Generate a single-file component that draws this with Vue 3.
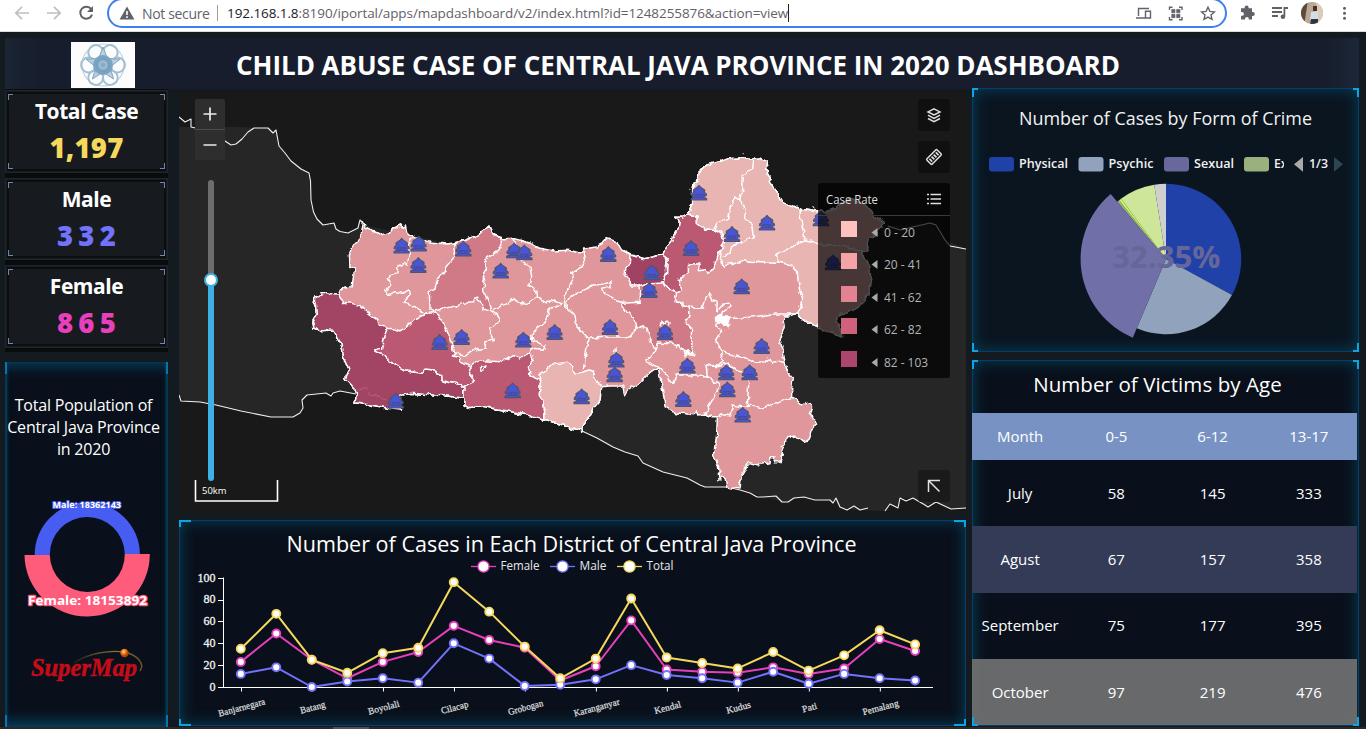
<script setup>
const stats = [
  { label: 'Total Case', value: '1,197', tone: 'yellow' },
  { label: 'Male', value: '332', tone: 'violet' },
  { label: 'Female', value: '865', tone: 'pink' },
]

const headings = ['Month', '0-5', '6-12', '13-17']
const rows = [
  ['July', '58', '145', '333'],
  ['Agust', '67', '157', '358'],
  ['September', '75', '177', '395'],
  ['October', '97', '219', '476'],
]

const legend = [
  { range: '0 - 20', color: '#fcc2c0', y: 221 },
  { range: '20 - 41', color: '#f5a3a8', y: 253 },
  { range: '41 - 62', color: '#e38290', y: 286 },
  { range: '62 - 82', color: '#cf617d', y: 318 },
  { range: '82 - 103', color: '#ad466d', y: 351 },
]

const crimes = [
  { name: 'Physical', color: '#2042a8', x: 989, w: 49 },
  { name: 'Psychic', color: '#91a3bc', x: 1078.5, w: 45 },
  { name: 'Sexual', color: '#68689c', x: 1164, w: 40 },
]

const slice = (cx, cy, r, a0, a1) => {
  const p = (a) => {
    const t = ((a - 90) * Math.PI) / 180
    return `${(cx + r * Math.cos(t)).toFixed(2)} ${(cy + r * Math.sin(t)).toFixed(2)}`
  }
  return `M${cx} ${cy}L${p(a0)}A${r} ${r} 0 ${a1 - a0 > 180 ? 1 : 0} 1 ${p(a1)}Z`
}
const slices = [
  { d: slice(1166, 259, 75.2, 0, 118.7), color: '#2042a8' },
  { d: slice(1166, 259, 75.2, 118.7, 202.9), color: '#91a3bc' },
  { d: slice(1166, 259, 75.2, 319.6, 321.4), color: '#9ab17f' },
  { d: slice(1166, 259, 75.2, 321.4, 323.2), color: '#c8f95c' },
  { d: slice(1166, 259, 75.2, 323.2, 351), color: '#cde69a' },
  { d: slice(1166, 259, 75.2, 351, 360), color: '#cfcfcf' },
  { d: slice(1166, 259, 85.4, 202.9, 319.6), color: '#706fa8' },
]

const px = (i) => 240.8 + i * 35.49
const py = (v) => 687 - v * 1.092
const series = [
  { name: 'Female', color: '#e83fbd', values: [23, 49, 25, 8, 23, 32, 56, 43, 36, 6, 19, 61, 16, 14, 13, 18, 12, 17, 44, 33] },
  { name: 'Male', color: '#7272fb', values: [12, 18, 0, 5, 8, 4, 40, 26, 1, 2, 7, 20, 11, 8, 4, 14, 3, 12, 8, 6] },
  { name: 'Total', color: '#f6d95c', values: [35, 67, 25, 13, 31, 36, 96, 69, 37, 8, 26, 81, 27, 22, 17, 32, 15, 29, 52, 39] },
]
const line = (vals) => vals.map((v, i) => `${px(i)},${py(v)}`).join(' ')
const keys = [
  { name: 'Female', color: '#e83fbd', x: 471, w: 39 },
  { name: 'Male', color: '#7272fb', x: 550, w: 27 },
  { name: 'Total', color: '#f6d95c', x: 617, w: 27 },
]
const districts = [
  ['Banjarnegara', 48], ['Batang', 26], ['Boyolali', 32], ['Cilacap', 28], ['Grobogan', 36],
  ['Karanganyar', 47], ['Kendal', 27], ['Kudus', 25], ['Pati', 15], ['Pemalang', 37],
]

/* Map geometry is in thirds of a pixel, measured from page point (300, 140). */
const province =
  '115,465 121,450 130,445 157,440 160,410 165,388 150,378 148,345 155,322 175,302 185,280 190,245 197,264 215,274 235,279 250,287 266,281 272,270 290,260 302,254 307,262 316,255 320,275 335,290 358,298 385,305 440,312 470,307 500,300 530,288 550,274 567,258 574,278 590,290 610,296 640,295 690,309 720,325 760,333 800,331 840,338 850,328 890,320 912,308 918,296 945,303 958,318 965,330 995,345 1030,356 1060,350 1085,345 1098,325 1115,305 1122,285 1135,265 1138,243 1125,232 1145,232 1165,222 1178,190 1178,150 1182,130 1196,118 1190,105 1202,95 1220,75 1260,65 1280,57 1320,54 1360,55 1378,55 1398,65 1402,100 1420,145 1445,188 1480,198 1500,208 1560,217 1575,215 1610,200 1655,175 1695,195 1725,228 1750,248 1742,262 1730,270 1728,284 1706,300 1702,333 1688,335 1690,355 1710,375 1706,395 1712,420 1706,450 1702,470 1675,500 1642,518 1620,522 1605,550 1618,560 1625,588 1600,578 1575,572 1550,555 1510,540 1490,518 1470,528 1455,527 1449,540 1453,560 1440,600 1449,630 1455,665 1460,690 1480,715 1475,740 1475,772 1490,780 1505,795 1530,788 1535,800 1528,820 1540,830 1548,850 1535,870 1525,900 1515,904 1500,892 1485,895 1475,888 1460,890 1455,908 1443,920 1448,940 1440,965 1422,965 1425,950 1412,950 1410,968 1375,975 1348,968 1335,985 1324,1005 1320,1047 1280,1042 1276,1020 1268,1010 1260,1020 1255,975 1240,945 1248,900 1250,880 1252,830 1235,830 1218,822 1195,825 1190,812 1185,824 1140,820 1118,815 1095,800 1092,770 1085,740 1075,683 1050,700 1030,720 980,752 975,768 968,738 930,738 905,740 900,780 880,805 865,835 855,845 845,873 780,852 735,838 680,824 620,812 540,798 510,806 492,795 492,775 450,769 400,765 330,760 300,768 285,790 305,810 265,805 230,798 165,788 170,755 135,718 148,690 130,650 128,625 112,590 100,570 60,572 42,565 38,545 52,520 50,500 40,488 42,472 60,464 80,458 100,464'

const shaded = [
  { c: '#a24465', p: '115,465 130,487 155,490 180,497 205,518 228,535 240,555 262,565 255,590 248,602 245,625 222,632 245,640 260,645 265,663 290,675 315,692 370,700 375,687 395,690 425,708 428,722 460,730 492,740 492,775 450,769 400,765 330,760 300,768 285,790 305,810 265,805 230,798 165,788 170,755 135,718 148,690 130,650 128,625 112,590 100,570 60,572 42,565 38,545 52,520 50,500 40,488 42,472 60,464 80,458 100,464' },
  { c: '#bb5872', p: '262,565 285,567 300,573 318,562 345,540 370,528 395,515 412,524 440,570 452,600 465,640 457,648 478,652 480,665 510,680 515,688 508,698 523,722 492,740 460,730 428,722 425,708 395,690 375,687 370,700 315,692 290,675 265,663 260,645 222,632 245,625 248,602' },
  { c: '#bb5872', p: '515,675 545,662 605,665 635,648 660,657 690,640 700,665 685,680 690,705 722,718 718,765 732,785 735,838 680,824 620,812 540,798 510,806 492,795 492,740 523,722 508,698' },
  { c: '#d17a87', p: '470,307 500,300 530,288 550,274 567,258 574,278 590,290 605,297 600,322 592,335 555,358 556,385 548,400 555,425 551,450 563,480 573,512 555,505 540,490 533,475 525,470 520,488 490,490 450,502 400,513 390,505 388,455 405,448 410,422 435,395 438,380 460,355 465,325' },
  { c: '#e9b5b3', p: '722,718 720,700 735,692 755,673 780,670 805,667 818,680 815,695 830,700 852,695 870,690 880,695 885,712 905,740 900,780 880,805 865,835 855,845 845,873 780,852 735,838 732,785 718,765' },
  { c: '#e9b5b3', p: '1165,222 1178,190 1178,150 1182,130 1196,118 1190,105 1202,95 1220,75 1260,65 1280,57 1320,54 1360,55 1378,55 1398,65 1402,100 1420,145 1445,188 1480,198 1500,208 1560,217 1575,215 1610,200 1655,175 1695,195 1725,228 1750,248 1742,262 1730,270 1728,284 1706,300 1702,333 1688,335 1690,355 1710,375 1706,395 1712,420 1706,450 1702,470 1675,500 1642,518 1620,522 1605,550 1618,560 1625,588 1600,578 1575,572 1550,555 1510,540 1490,518 1505,495 1508,480 1500,455 1495,425 1492,395 1475,375 1432,367 1350,364 1330,362 1300,372 1285,368 1270,382 1265,360 1258,355 1262,330 1275,300 1262,278 1245,268 1215,268 1192,250 1190,228' },
  { c: '#a04364', p: '990,345 1030,356 1060,350 1085,345 1102,358 1098,380 1100,400 1090,425 1062,432 1040,430 1020,438 995,438 985,415 975,400 980,380 988,375' },
  { c: '#bb5872', p: '1125,232 1145,232 1165,222 1190,228 1192,250 1215,268 1245,268 1262,278 1275,300 1262,330 1250,345 1242,390 1225,397 1212,390 1195,392 1198,370 1180,368 1165,375 1165,400 1145,410 1138,425 1146,448 1130,456 1105,445 1090,425 1100,400 1102,358 1085,345 1098,325 1115,305 1122,285 1135,265 1138,243' },
  { c: '#d17a87', p: '965,490 1020,487 1022,450 1015,438 1040,430 1090,425 1105,445 1130,456 1125,485 1150,490 1168,505 1170,525 1155,545 1175,565 1172,620 1178,640 1185,648 1165,640 1145,628 1135,615 1110,608 1075,606 1065,630 1052,600 1042,565 1008,560 1002,535 985,520' },
]

const borders = [
  '335,290 325,305 328,340 322,375 310,370 295,378 290,400 262,415 272,435 255,455 265,463 285,455 310,460 325,450 328,468 312,485 350,505 375,520 395,515',
  '573,512 590,525 600,545 570,565 568,575 580,600 558,605 555,625 535,628 520,632 500,645 465,640',
  '640,297 645,320 640,345 690,380 695,410 685,435 705,445 710,470 680,490 665,492 640,478 620,490 573,512',
  '710,470 735,485 765,480 785,488',
  '850,332 854,370 845,380 815,400 818,430 800,450 790,488',
  '785,488 770,500 750,505 735,545 715,560 695,590 700,605 735,615 730,628 695,625 690,640',
  '790,490 825,525 828,555 865,595 920,592 980,590 1005,575 1008,560',
  '790,490 840,455 880,435 910,432 930,425 930,440 905,445 910,460 935,470 965,490',
  '865,595 858,640 850,690',
  '1065,630 1055,650 1035,662 1080,685 1120,728 1130,705 1200,705 1222,712 1258,735 1240,775 1225,800 1218,822',
  '1125,485 1165,500 1205,508 1212,485 1230,460 1238,480 1252,485 1250,515 1270,492 1290,490 1293,498 1270,515 1265,540 1250,555 1262,580 1250,600 1265,635 1270,665 1255,678 1218,675 1222,712',
  '1265,527 1280,535 1320,535 1380,528 1420,522 1485,522',
  '1265,635 1320,650 1350,658 1370,670 1398,668 1405,655 1415,670 1455,665',
  '1218,675 1250,680 1285,672 1310,692 1340,700 1346,730 1342,800',
  '1252,830 1265,820 1290,828 1298,795 1325,800 1342,800 1350,790 1380,805 1430,790 1475,772',
  '1360,60 1358,90 1327,105 1325,150 1320,180 1305,170 1290,200 1282,240 1255,248 1242,265',
  '1320,180 1335,210 1338,240 1355,255 1360,290 1320,308 1295,320 1290,340 1265,350',
  '1432,367 1430,340 1470,325 1500,305 1515,300 1510,270 1502,240 1500,208',
  '1515,300 1550,307 1570,318 1630,315 1688,335',
  '540,685 548,680 558,678 552,688 544,692 540,685',
  '941,655 945,625 951,625 950,650',
  '1083,560 1086,545 1095,552 1100,543 1110,548 1108,560',
]

const sites = [
  [305, 318], [356, 312], [355, 376], [490, 327], [602, 393], [643, 332], [673, 338], [419, 607], [485, 592],
  [670, 600], [764, 577], [638, 752], [287, 783], [845, 770], [925, 343], [1055, 398], [1048, 451], [930, 562],
  [949, 660], [944, 704], [1095, 577], [1173, 325], [1197, 159], [1296, 283], [1401, 249], [1325, 440],
  [1385, 619], [1162, 678], [1150, 778], [1279, 698], [1349, 698], [1282, 749], [1328, 825], [1563, 236], [1599, 368],
]
</script>

<template>
  <div class="screen">
    <div class="toolbar">
      <svg class="nav" width="110" height="31" viewBox="0 0 110 31" fill="none">
        <g stroke="#bdbfc1" stroke-width="1.7">
          <path d="M29 13H16M22 6.8L15.8 13L22 19.2" />
          <path d="M47 13H60M54 6.8L60.2 13L54 19.2" />
        </g>
        <path d="M91.2 9.2A6 6 0 1 0 92 14.6" stroke="#5f6368" stroke-width="2" />
        <path d="M93 6V12H87Z" fill="#5f6368" />
      </svg>
      <div class="omnibox">
        <svg class="warn" width="16" height="14" viewBox="0 0 16 14">
          <path d="M8 .5L15.4 13.4H.6Z" fill="#5f6368" />
          <path d="M8 5V9M8 10.2V12" stroke="#fff" stroke-width="1.6" />
        </svg>
        <span class="insecure">Not secure</span>
        <span class="bar"></span>
        <span class="url"><b>192.168.1.8</b>:8190/iportal/apps/mapdashboard/v2/index.html?id=1248255876&amp;action=view</span>
        <span class="caret"></span>
        <svg class="tools" width="88" height="24" viewBox="0 0 88 24" fill="none" stroke="#5f6368" stroke-width="1.4">
          <path d="M5.5 15V7.5H16M3 17H12M12.5 10.2H17.5V17H12.5Z" />
          <path d="M36.5 9V6.2H39.5M46 6.2H49V9M49 16V18.8H46M39.5 18.8H36.5V16" />
          <path d="M38.7 8.4H42V11.8H38.7ZM43.6 8.4H47V11.8H43.6ZM38.7 13.3H42V16.7H38.7ZM43.6 13.3H47V16.7H43.6Z" fill="#5f6368" stroke-width=".6" />
          <path d="M75 6.2L76.9 10.4L81.4 10.9L78 13.9L79 18.4L75 16.1L71 18.4L72 13.9L68.6 10.9L73.1 10.4Z" />
        </svg>
      </div>
      <svg class="extras" width="139" height="31" viewBox="1227 0 139 31">
        <path d="M1241 8.3H1244.6V7.5A2 2 0 0 1 1248.6 7.5V8.3H1252V12H1252.8A2 2 0 0 1 1252.8 16H1252V19.6H1248.8V18.8A1.9 1.9 0 0 0 1245 18.8V19.6H1241V15.8H1242A1.9 1.9 0 0 0 1242 12H1241Z" fill="#5f6368" />
        <g stroke="#5f6368" stroke-width="1.8" fill="none">
          <path d="M1272 8H1282M1272 12H1282M1272 16H1278M1284.4 16.6V8H1288" />
        </g>
        <circle cx="1282.9" cy="16.8" r="2.3" fill="#5f6368" />
        <clipPath id="face"><circle cx="1312" cy="13" r="11" /></clipPath>
        <g clip-path="url(#face)">
          <path d="M1300 0H1325V26H1300Z" fill="#b9a893" />
          <path d="M1300 0H1308L1304 26H1300Z" fill="#5d4a3d" />
          <path d="M1316 0H1325V26H1318Z" fill="#d9cdb8" />
          <path d="M1311 12L1318 11L1318 21L1310 20Z" fill="#d5dde6" />
          <path d="M1311 19H1318V26H1310Z" fill="#30363f" />
          <path d="M1313 6H1317V11H1313Z" fill="#4b3027" />
        </g>
        <g fill="#5f6368"><circle cx="1344.5" cy="8.3" r="1.5" /><circle cx="1344.5" cy="13.3" r="1.5" /><circle cx="1344.5" cy="18.3" r="1.5" /></g>
      </svg>
    </div>

    <header class="banner">
      <svg class="emblem" width="64" height="46" viewBox="0 0 64 46">
        <path d="M0 0H64V46H0Z" fill="#fcfcfc" />
        <g fill="none" stroke="#a3c0d3" stroke-width="2" transform="translate(32 23)">
          <circle r="21" stroke="#bfd3e0" stroke-width="1.2" />
          <circle v-for="n in 6" :key="n" :transform="`rotate(${n * 60 - 30}) translate(0 -14.500)`" r="7.400" />
        </g>
        <path d="M32 5L36.4 16.6L49 17.2L39 25L42.6 37L32 30.2L21.4 37L25 25L15 17.2L27.6 16.6Z" fill="#b8cfdf" stroke="#7fa5c0" />
        <circle cx="32" cy="23" r="10" fill="#7ba3c2" /><circle cx="32" cy="23" r="6" fill="#8fb2cd" stroke="#6c97b8" />
        <circle cx="32" cy="23" r="3" fill="#86abc9" stroke="#a9c5d8" />
      </svg>
      <h1>CHILD ABUSE CASE OF CENTRAL JAVA PROVINCE IN 2020 DASHBOARD</h1>
    </header>

    <main class="board">
      <aside class="left">
        <div class="stats">
          <div v-for="s in stats" :key="s.label" class="stat">
            <i class="mark"></i>
            <span class="stat-label">{{ s.label }}</span>
            <strong :class="s.tone">{{ s.value }}</strong>
          </div>
        </div>
        <section class="panel side population">
          <h3>Total Population of<br />Central Java Province<br />in 2020</h3>
          <svg width="163" height="245" viewBox="5 480 163 245">
            <path d="M34.7 555.2A52.6 52.6 0 0 1 139.9 554.2L124.8 554.2A37.5 37.5 0 0 0 49.8 555Z" fill="#475cf0" />
            <path d="M24.5 555A62.6 62 0 0 0 149.8 554L124.8 554A37.5 37.5 0 0 1 49.8 555Z" fill="#ff5b7b" />
            <g class="sans" font-weight="700" fill="#fff" paint-order="stroke" stroke-linejoin="round">
              <text x="52.5" y="508" font-size="9.2" textLength="68.5" lengthAdjust="spacingAndGlyphs" stroke="#475cf0" stroke-width="2">Male: 18362143</text>
              <text x="28" y="605" font-size="13" textLength="119" lengthAdjust="spacingAndGlyphs" stroke="#ff5b7b" stroke-width="2.4">Female: 18153892</text>
            </g>
            <defs>
              <linearGradient id="orbit"><stop offset="0" stop-color="#7a6230" stop-opacity=".2" /><stop offset=".6" stop-color="#8d7032" /><stop offset="1" stop-color="#6b5325" /></linearGradient>
              <radialGradient id="sun" cx=".4" cy=".35"><stop offset="0" stop-color="#ffd9a0" /><stop offset=".45" stop-color="#f88a1c" /><stop offset="1" stop-color="#b0430c" /></radialGradient>
            </defs>
            <path d="M74 663C88 653 110 650 124 652C138 655 145 664 140 671" fill="none" stroke="url(#orbit)" stroke-width="1.4" />
            <text x="31" y="676" class="serif" font-size="25" font-weight="700" font-style="italic" fill="#c40d18" stroke="#c40d18" stroke-width=".5" textLength="106" lengthAdjust="spacingAndGlyphs">SuperMap</text>
            <circle cx="124.5" cy="653" r="4.2" fill="url(#sun)" />
          </svg>
          <i class="mark"></i>
        </section>
      </aside>

      <div class="middle">
        <svg class="map" width="787" height="422" viewBox="179 91 787 422">
          <filter id="ragged" x="-5%" y="-5%" width="110%" height="110%">
            <feTurbulence type="fractalNoise" baseFrequency=".05" numOctaves="2" seed="4" result="n" />
            <feDisplacementMap in="SourceGraphic" in2="n" scale="17" xChannelSelector="R" yChannelSelector="G" />
          </filter>
          <path d="M179 91H966V513H179Z" fill="#191919" />
          <g stroke="#f0f0f0" stroke-width="1.1" stroke-linejoin="round">
            <path stroke="none" fill="#262626" d="M179 127H240L256 128L268 128L274 134L276 130L279 146L291 160L309 173L311 205L315 216L323 225L334 223L338 230L348 233L358 228L363 225L480 250L640 265L700 230L860 220L890 226L930 223L945 240L966 249V508L951 509L936 502L925 505L913 498L900 498L898 508L890 504L885 511L854 510L839 507L834 501L804 497L784 502L763 497L740 489L705 487L687 478L663 472L643 463L638 456L613 447L582 431L540 400L400 385L355 393L340 391L307 395L302 402L300 413L293 417L271 417L241 411L216 405L200 402L185 402L179 395Z" />
            <path fill="none" d="M179 117L185 122L191 119L191 127L200 129L225 141L231 145L236 144L242 139L248 132L254 128L268 128L273 133L276 130L279 146L285 153L291 161L301 169L309 173L310.500 181L311 200L313.500 212L317 219L323 225L334 223L336 229L340 231.500L348 233L358 228L360 220L363 223M888 226L900 230L930 223L936 225L945 240L950 246L966 249" />
            <path fill="none" d="M179 395L181 401L200 402L216 405L241 411L271 417L293 417L300 413L303 408L302 400L307 395L326 393L331 396L333 393L340 391L356 394M582 431L597 438L613 447L625 452L638 456L643 463L663 472L687 478L700 485L705 487L727 487L740 490L750 493L757 497L763 497L776 496L782 502L788 502L794 498L804 497L815 500H830L833 503L836 498L840 507L847 510L854 506L860 510L868 508M885 511L890 504L898 508L900 498L906 501L913 498L925 505L928 507L936 502L951 509L966 508" />
          </g>
          <g transform="translate(300 140) scale(.33333)" stroke="#fff" stroke-width="4.400" stroke-linejoin="round" fill="none">
            <g filter="url(#ragged)">
              <polygon :points="province" fill="#e0979b" />
              <polygon v-for="(s, i) in shaded" :key="i" :points="s.p" :fill="s.c" />
              <polyline v-for="(b, i) in borders" :key="'b' + i" :points="b" />
              <path d="M170 748L205 742L212 765L240 770L262 778" stroke="#bd5877" stroke-width="3" />
              <path d="M1246 528L1266 522L1268 540L1275 530L1288 532L1280 545L1292 550L1285 560L1278 552L1270 555L1262 542L1248 545Z" fill="#fff" />
              <path d="M1128 620L1136 614L1142 626L1155 628M1152 636L1158 645L1162 635L1182 642" />
            </g>
            <path d="M1328 41H1331M1168 148H1171M1538 198L1543 205M1190 150L1180 158" stroke-width="3" />
            <g v-for="(p, i) in sites" :key="'s' + i" :transform="`translate(${p[0]} ${p[1]})`">
              <path d="M0 -23L5 -17L17 -9V-5H13L22 3V8H16V13L23 17V21H-23V17L-16 13V8H-22V3L-13 -5H-17V-9L-5 -17Z" fill="#4a55d6" stroke="#50556e" stroke-width="3.400" />
              <path d="M-13 5H13M-10 5V13M-4 5V13M4 5V13M10 5V13M-15 14H15" stroke="#454b86" stroke-width="2.500" />
            </g>
          </g>

          <g>
            <rect x="195" y="99" width="30" height="61" rx="2" fill="#2e2e2e" />
            <path d="M195 129.500H225" stroke="#4c4c4c" />
            <path d="M203.500 114H216.500M210 107.500V120.500M203.500 145H216.500" stroke="#ececec" stroke-width="1.7" />
            <path d="M211 183V280" stroke="#6d6d6d" stroke-width="6" stroke-linecap="round" />
            <path d="M211 280V478" stroke="#3eb0e4" stroke-width="6" stroke-linecap="round" />
            <circle cx="211" cy="280" r="6" fill="#fff" stroke="#3eb0e4" stroke-width="2" />
            <path d="M195.500 480V501H277.500V480" fill="none" stroke="#fff" stroke-width="1.6" />
            <text x="202" y="494" class="sans" font-size="9.300" fill="#fff" textLength="24.500" lengthAdjust="spacingAndGlyphs">50km</text>
          </g>

          <g>
            <rect x="918" y="99" width="32" height="32" rx="3" fill="#101010" />
            <rect x="918" y="141" width="32" height="32" rx="3" fill="#101010" />
            <rect x="918" y="470" width="32" height="32" rx="3" fill="#1a1a1a" />
            <g fill="none" stroke="#e0e0e0" stroke-width="1.5">
              <path d="M934 108.800L940 111.900L934 115L928 111.900ZM928 115.200L934 118.300L940 115.200M928 118.500L934 121.600L940 118.500" />
              <g transform="translate(934 157) rotate(-45)">
                <rect x="-7.200" y="-3.700" width="14.400" height="7.400" rx="1" />
                <path d="M-4.500 -2V2M-1.500 -2V2M1.500 -2V2M4.500 -2V2" stroke-width="1.700" />
              </g>
              <path d="M939.500 491.500L928.500 480.500M928.500 492V480.500H940" />
            </g>
          </g>

          <g>
            <rect x="818" y="183" width="132" height="195" rx="3" fill="#000" fill-opacity=".7" />
            <path d="M818 215.500H950" stroke="#3a3a3a" />
            <text x="826" y="204" class="sans" font-size="12" fill="#dedede" textLength="52" lengthAdjust="spacingAndGlyphs">Case Rate</text>
            <path d="M930.500 194.500H941M930.500 199H941M930.500 203.500H941M927 194.500H929M927 199H929M927 203.500H929" stroke="#e0e0e0" stroke-width="1.500" />
            <g v-for="l in legend" :key="l.range">
              <rect x="841" :y="l.y" width="16" height="16" :fill="l.color" />
              <path :d="`M871.500 ${l.y + 11.500}L877.500 ${l.y + 7}V${l.y + 16}Z`" fill="#aaa" />
              <text x="884" :y="l.y + 16" class="sans" font-size="12" fill="#b5b5b5" :textLength="l.range === '0 - 20' ? 31 : l.range === '82 - 103' ? 44 : 37.500" lengthAdjust="spacingAndGlyphs">{{ l.range }}</text>
            </g>
          </g>
        </svg>

        <section class="panel trend">
          <svg width="786" height="206" viewBox="179 520 786 206">
            <text x="286.500" y="552" class="sans" font-size="21" fill="#fff" textLength="570" lengthAdjust="spacingAndGlyphs">Number of Cases in Each District of Central Java Province</text>
            <g v-for="k in keys" :key="k.name">
              <path :d="`M${k.x} 566.500h25`" :stroke="k.color" stroke-width="1.300" />
              <circle :cx="k.x + 12.500" cy="566.500" r="5.600" fill="#fff" :stroke="k.color" stroke-width="1.300" />
              <text :x="k.x + 29.500" y="570" class="sans" font-size="11.800" fill="#e8e8e8" :textLength="k.w" lengthAdjust="spacingAndGlyphs">{{ k.name }}</text>
            </g>
            <path d="M223.500 577.500V687.500M223 687.500H933M218 578.500H223M218 600.500H223M218 621.500H223M218 643.500H223M218 665.500H223M218 687.500H223" stroke="#fff" fill="none" />
            <path v-for="n in 10" :key="n" :d="`M${241.500 + (n - 1) * 70.980} 687.500v4`" stroke="#fff" />
            <text v-for="n in 6" :key="'y' + n" x="215.500" :y="691 - (n - 1) * 21.900" text-anchor="end" class="serif" font-size="12" fill="#f2f2f2" stroke="#f2f2f2" stroke-width=".3">{{ (n - 1) * 20 }}</text>
            <text
              v-for="(d, i) in districts" :key="d[0]" class="serif" font-size="9.500" fill="#dcdcdc" stroke="#dcdcdc" stroke-width=".25" text-anchor="middle"
              :transform="`translate(${242.500 + i * 70.980} 710.500) rotate(-15)`" :textLength="d[1]" lengthAdjust="spacingAndGlyphs"
            >{{ d[0] }}</text>
            <g v-for="s in series" :key="s.name" :stroke="s.color">
              <polyline :points="line(s.values)" fill="none" stroke-width="2" stroke-linejoin="round" />
              <circle v-for="(v, i) in s.values" :key="i" :cx="px(i)" :cy="py(v)" r="4" fill="#fff" stroke-width="1.900" />
            </g>
          </svg>
          <i class="mark"></i>
        </section>
      </div>

      <aside class="right">
        <section class="panel crime">
          <svg width="387" height="264" viewBox="972 88 387 264">
            <text x="1019" y="125" class="sans" font-size="17.500" fill="#f2f2f2" textLength="293" lengthAdjust="spacingAndGlyphs">Number of Cases by Form of Crime</text>
            <g v-for="c in crimes" :key="c.name">
              <rect :x="c.x" y="157" width="25" height="14.500" rx="3" :fill="c.color" />
              <text :x="c.x + 30" y="168" class="sans" font-size="12.300" font-weight="600" fill="#f2f2f2" :textLength="c.w" lengthAdjust="spacingAndGlyphs">{{ c.name }}</text>
            </g>
            <rect x="1244" y="157" width="25" height="14.500" rx="3" fill="#9ab17f" />
            <clipPath id="cut"><path d="M1270 150H1284V180H1270Z" /></clipPath>
            <text x="1274" y="168" class="sans" font-size="12.300" font-weight="600" fill="#f2f2f2" clip-path="url(#cut)">Ex</text>
            <path d="M1294 164.300L1303 157V171.700Z" fill="#aaa" />
            <path d="M1343 164.300L1334 157V171.700Z" fill="#2f4554" />
            <text x="1309" y="168" class="sans" font-size="12" font-weight="600" fill="#f0f0f0" textLength="19" lengthAdjust="spacingAndGlyphs">1/3</text>
            <path v-for="(s, i) in slices" :key="i" :d="s.d" :fill="s.color" />
            <text x="1112" y="267.500" class="sans" font-size="31" font-weight="700" fill="#666699" textLength="108.500" lengthAdjust="spacingAndGlyphs">32.35%</text>
          </svg>
          <i class="mark"></i>
        </section>

        <section class="panel ages">
          <i class="mark"></i>
          <h2>Number of Victims by Age</h2>
          <div class="grid head"><span v-for="h in headings" :key="h">{{ h }}</span></div>
          <div v-for="r in rows" :key="r[0]" class="grid"><span v-for="c in r" :key="c">{{ c }}</span></div>
        </section>
      </aside>
    </main>
    <div class="foot"><i></i></div>
  </div>
</template>

<style>
html, body { margin: 0; overflow: hidden; background: #131b21; }
</style>

<style scoped>
* { box-sizing: border-box; }
.screen { width: 1366px; height: 729px; overflow: hidden; position: relative; background: #131b21; color: #fff; font-family: "Open Sans", "Noto Sans", sans-serif; display: flex; flex-direction: column; }
.screen svg { display: block; flex: none; }
.sans { font-family: "Open Sans", "Noto Sans", sans-serif; }
.serif { font-family: "Liberation Serif", serif; }

.toolbar { height: 32px; flex: none; background: #fff; border-bottom: 1px solid #d9dbdd; display: flex; overflow: hidden; }
.nav { margin-right: -3px; }
.omnibox { width: 1120px; height: 30px; margin-top: -2px; border: 2px solid #3f81ec; border-radius: 15px; display: flex; align-items: center; flex: none; padding-left: 10px; color: #5f6368; font-size: 14px; font-family: "Open Sans", sans-serif; }
.warn { margin-right: 7px; }
.insecure { width: 67px; white-space: nowrap; letter-spacing: -0.34px; }
.bar { width: 1px; height: 16px; background: #9a9da1; margin: 0 9px 0 8px; }
.url { width: 561px; white-space: nowrap; font-size: 13.5px; letter-spacing: -0.08px; }
.url b { font-weight: 400; color: #202124; }
.caret { width: 1px; height: 18px; background: #222; }
.tools { margin-left: 344px; }
.extras { flex: none; }

.banner { height: 51px; margin: 6px 7px 0 5px; flex: none; display: flex; align-items: center; background: linear-gradient(90deg, #1b2534 0, #171d2d 34px, #171d2d 1320px, #1c2737 100%); }
.emblem { margin: 2px 0 0 66px; }
h1 { margin: 2px 0 0 101px; width: 884px; font-size: 26px; line-height: 34px; font-weight: 700; white-space: nowrap; letter-spacing: -0.03px; }

.board { display: flex; height: 638px; flex: none; padding-left: 5px; }
.left { width: 163px; margin-right: 11px; display: flex; flex-direction: column; }
.stats { height: 263px; padding: 1px 0 4px; background: #090c0d; margin-bottom: 10px; display: flex; flex-direction: column; gap: 5px; flex: none; }
.stat { position: relative; height: 83px; border: 1px solid #22262a; outline: 2px solid #0b0e0f; outline-offset: -4px; background: #171b20; text-align: center; display: flex; flex-direction: column; }
.stat-label { font-size: 21px; line-height: 28px; font-weight: 700; letter-spacing: -0.45px; margin-top: 6px; }
.stat strong { font-size: 27.5px; line-height: 36px; font-weight: 800; letter-spacing: 5.2px; margin: 5px -5px 0 0; }
.stat strong.yellow { color: #f6d95c; letter-spacing: 0.2px; margin-right: 0; }
.stat strong.violet { color: #7272fb; }
.stat strong.pink { color: #e83fbd; }

.mark { position: absolute; inset: 0; pointer-events: none; --c: #0aa5e4; --t: 2px; --l: 6px; --h: 9px;
  background:
    linear-gradient(var(--c), var(--c)) 0 0 / var(--l) var(--t), linear-gradient(var(--c), var(--c)) 0 0 / var(--t) var(--h),
    linear-gradient(var(--c), var(--c)) 100% 0 / var(--l) var(--t), linear-gradient(var(--c), var(--c)) 100% 0 / var(--t) var(--h),
    linear-gradient(var(--c), var(--c)) 0 100% / var(--l) var(--t), linear-gradient(var(--c), var(--c)) 0 100% / var(--t) var(--h),
    linear-gradient(var(--c), var(--c)) 100% 100% / var(--l) var(--t), linear-gradient(var(--c), var(--c)) 100% 100% / var(--t) var(--h);
  background-repeat: no-repeat; }
.stat .mark { inset: 3px 2px; --c: #7086b0; --t: 1px; --l: 5px; --h: 6px; }

.panel { position: relative; border: 1px solid #063e6c; background: #09101b; box-shadow: inset 0 0 15px #07415d; flex: none; }
.panel > svg { margin: -1px; }
.panel > .mark { inset: -1px; }
.population { height: 365px; border-width: 0 2px; border-color: #053853; box-shadow: inset 0 14px 14px -10px #07415f, inset 0 -16px 14px -10px #07415f, inset 0 0 3px #07415f; }
.population > .mark { --l: 2px; --h: 12px; inset: 0 -2px; --c: #0877a8; }
.population h3 { margin: 32px 0 0 -6px; height: 86px; font-size: 16px; line-height: 22px; font-weight: 400; text-align: center; letter-spacing: -0.2px; white-space: nowrap; }
.population > svg { margin: 0 -2px; }

.middle { width: 787px; margin-right: 6px; display: flex; flex-direction: column; }
.map { margin: 2px 0 7px; }
.trend { width: 787px; height: 206px; }
.trend > .mark { --l: 12px; --h: 7px; }

.right { width: 387px; margin-top: -1px; display: flex; flex-direction: column; gap: 8px; }
.crime { height: 264px; background: #0a1520; }
.ages { height: 366px; padding-top: 52px; }
.ages h2 { position: absolute; top: 8px; left: 0; width: 369px; margin: 0; font-size: 20.5px; line-height: 30px; font-weight: 400; text-align: center; letter-spacing: 0.08px; white-space: nowrap; }
.grid { height: 66.3px; margin: 0 1px 0 -1px; padding-bottom: 1px; display: grid; grid-template-columns: repeat(4, 1fr); align-items: center; text-align: center; font-size: 15px; }
.head { height: 47px; padding-bottom: 2px; background: #7893c3; }
.grid:nth-of-type(3) { background: #343b57; }
.grid:last-child { background: rgba(113, 113, 113, 0.92); }
.foot { height: 2px; background: #27292b; display: flex; }
.foot i { width: 36px; margin-left: 333px; background: #505254; }
</style>
